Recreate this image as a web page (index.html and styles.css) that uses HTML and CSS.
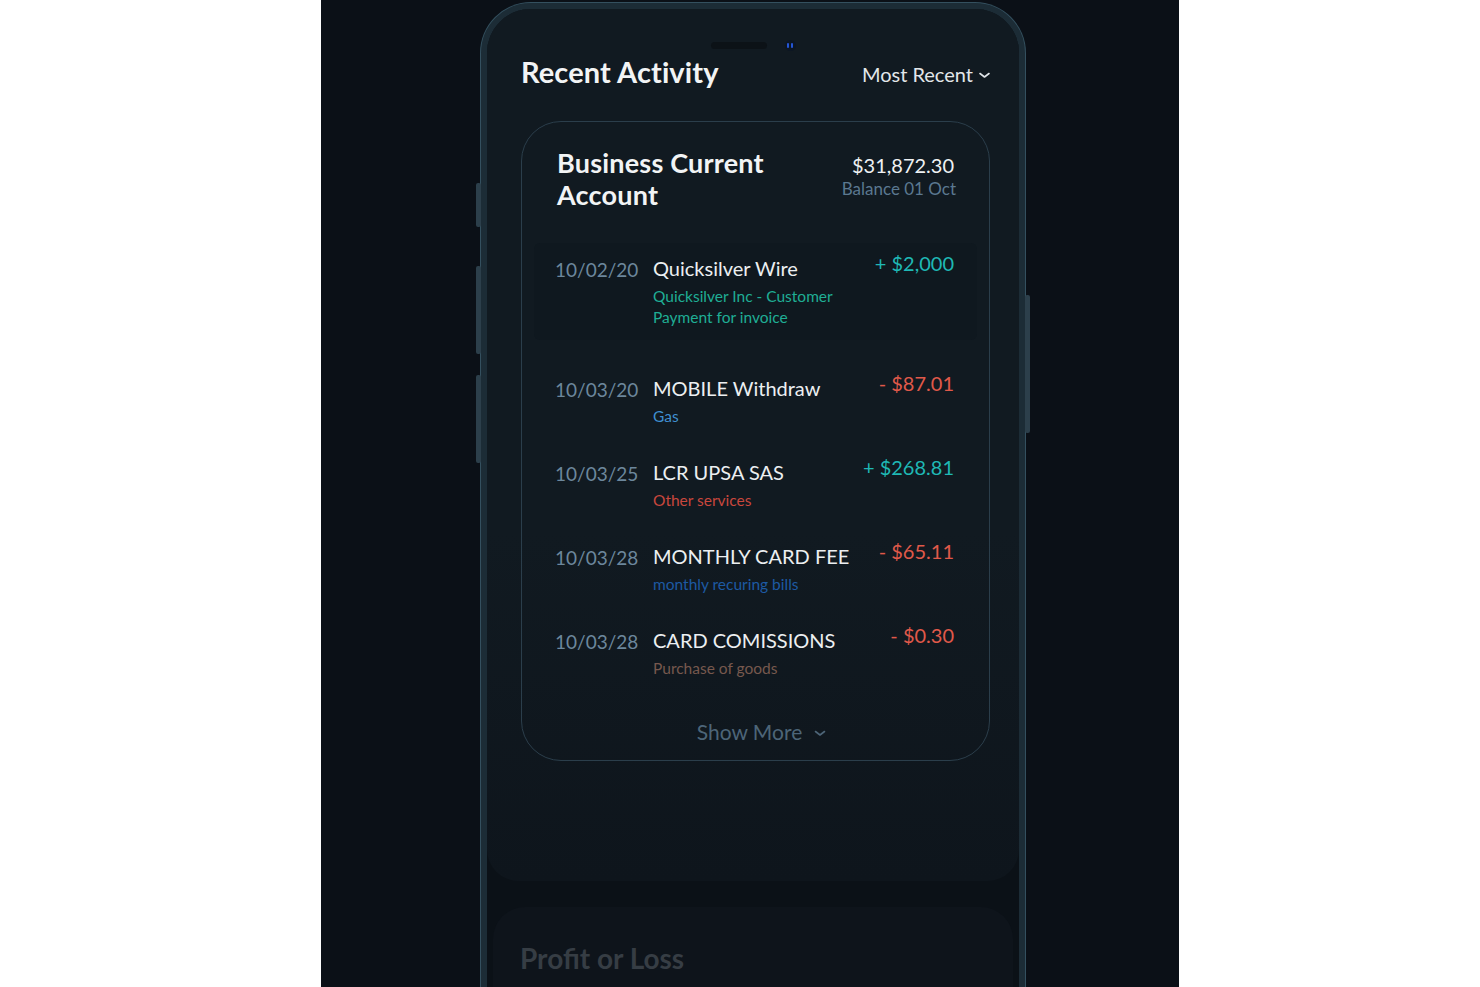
FILE: index.html
```html
<!DOCTYPE html>
<html lang="en">
<head>
<meta charset="utf-8">
<title>Recent Activity</title>
<link rel="stylesheet" href="styles.css">
</head>
<body>
<div class="stage">
  <div class="phone">
    <div class="btn btn-l1"></div>
    <div class="btn btn-l2"></div>
    <div class="btn btn-l3"></div>
    <div class="btn btn-r1"></div>
    <div class="screen">
      <section class="recent">
        <div class="statusbar">
          <span class="speaker"></span>
          <span class="camera"><i></i><i></i></span>
        </div>
        <header class="recent-head">
          <h1 class="recent-title">Recent Activity</h1>
          <div class="sort">Most Recent
            <svg class="chev" width="11" height="7" viewBox="0 0 11 7"><polyline points="1,1.5 5.5,5 10,1.5" fill="none" stroke="#dfe4e8" stroke-width="1.6" stroke-linecap="round" stroke-linejoin="round"/></svg>
          </div>
        </header>
        <div class="card">
          <div class="card-head">
            <h2 class="acct">Business Current<br>Account</h2>
            <div class="bal">
              <div class="bal-amt">$31,872.30</div>
              <div class="bal-date">Balance 01 Oct</div>
            </div>
          </div>
          <div class="rows">
            <div class="row row-hl">
              <div class="date">10/02/20</div>
              <div class="info">
                <div class="name">Quicksilver Wire</div>
                <div class="sub c-teal">Quicksilver Inc - Customer<br>Payment for invoice</div>
              </div>
              <div class="amt pos">+ $2,000</div>
            </div>
            <div class="row">
              <div class="date">10/03/20</div>
              <div class="info">
                <div class="name">MOBILE Withdraw</div>
                <div class="sub c-blue">Gas</div>
              </div>
              <div class="amt neg">- $87.01</div>
            </div>
            <div class="row">
              <div class="date">10/03/25</div>
              <div class="info">
                <div class="name">LCR UPSA SAS</div>
                <div class="sub c-red">Other services</div>
              </div>
              <div class="amt pos">+ $268.81</div>
            </div>
            <div class="row">
              <div class="date">10/03/28</div>
              <div class="info">
                <div class="name">MONTHLY CARD FEE</div>
                <div class="sub c-navy">monthly recuring bills</div>
              </div>
              <div class="amt neg">- $65.11</div>
            </div>
            <div class="row">
              <div class="date">10/03/28</div>
              <div class="info">
                <div class="name">CARD COMISSIONS</div>
                <div class="sub c-brown">Purchase of goods</div>
              </div>
              <div class="amt neg">- $0.30</div>
            </div>
          </div>
          <div class="more">Show More
            <svg class="chev" width="12" height="7" viewBox="0 0 12 7"><polyline points="1.5,1.5 6,5 10.5,1.5" fill="none" stroke="#4d6578" stroke-width="1.6" stroke-linecap="round" stroke-linejoin="round"/></svg>
          </div>
        </div>
      </section>
      <section class="pl">
        <h2 class="pl-title">Profit or Loss</h2>
      </section>
    </div>
  </div>
</div>
</body>
</html>
```

FILE: styles.css
```css
* { box-sizing: border-box; margin: 0; padding: 0; }
html, body { background: #ffffff; }
body { font-family: "Lato", "Liberation Sans", sans-serif; }

.stage {
  width: 858px;
  height: 987px;
  margin-left: 321px;
  background: #0b1017;
  overflow: hidden;
  padding-top: 3px;
}

.phone {
  position: relative;
  width: 544px;
  height: 1100px;
  margin-left: 160px;
  border: 6px solid #1c2c36;
  border-radius: 50px;
  box-shadow: 0 0 0 1px #34505f, inset 0 0 0 1px #2a404d;
  background: #0b1117;
}

.btn {
  position: absolute;
  width: 5px;
  background: #2c3f4b;
  border-radius: 2px;
}
.btn-l1 { left: -11px; top: 174px; height: 44px; }
.btn-l2 { left: -11px; top: 257px; height: 88px; }
.btn-l3 { left: -11px; top: 366px; height: 88px; }
.btn-r1 { right: -11px; top: 286px; height: 138px; }

.screen {
  height: 100%;
  border-radius: 44px;
  overflow: hidden;
  background: #0b1117;
}

.recent {
  background: linear-gradient(180deg, #111a21 0%, #111a21 60%, #0e151c 100%);
  border-radius: 0 0 32px 32px;
  padding: 30px 29px 120px 34px;
}

.statusbar {
  display: flex;
  justify-content: center;
  align-items: center;
  gap: 18px;
  height: 12px;
  margin-left: -34px;
  margin-right: -29px;
}
.speaker {
  width: 56px;
  height: 7px;
  border-radius: 4px;
  background: #0c1217;
}
.camera {
  width: 11px;
  height: 11px;
  border-radius: 50%;
  background: #0c1624;
  display: flex;
  align-items: center;
  justify-content: center;
  gap: 2px;
}
.camera i {
  display: block;
  width: 2px;
  height: 5px;
  background: #2456d6;
  border-radius: 1px;
}

.recent-head {
  margin-top: 3px;
  display: flex;
  justify-content: space-between;
  align-items: center;
  height: 36px;
  margin-bottom: 31px;
}
.recent-title {
  font-size: 29px;
  font-weight: 700;
  color: #f2f4f5;
  line-height: 36px;
  letter-spacing: 0.1px;
}
.sort {
  font-size: 20px;
  color: #e3e7ea;
  display: flex;
  align-items: center;
  gap: 6px;
  padding-top: 3px;
}
.sort .chev { margin-top: 3px; }

.card {
  border: 1px solid #2b3e4b;
  border-radius: 40px;
  height: 640px;
  padding: 25px 12px 0 12px;
  display: flex;
  flex-direction: column;
}

.card-head {
  display: flex;
  justify-content: space-between;
  align-items: flex-start;
  padding: 0 23px;
  margin-bottom: 32px;
}
.acct {
  font-size: 27px;
  font-weight: 700;
  line-height: 32px;
  color: #f2f4f5;
  letter-spacing: 0.2px;
}
.bal { text-align: right; margin-top: 5px; }
.bal-amt { font-size: 20px; line-height: 26px; color: #eef1f3; }
.bal-date { font-size: 17px; line-height: 22px; color: #5b7890; margin-right: -2px; }

.rows {
  display: flex;
  flex-direction: column;
  gap: 8px;
}
.row {
  display: flex;
  align-items: flex-start;
  padding: 12px 23px 12px 21px;
  border-radius: 6px;
}
.row-hl {
  background: #0f181f;
  margin-bottom: 15px;
}
.date {
  width: 98px;
  flex: none;
  font-size: 19px;
  line-height: 26px;
  color: #6c879c;
  padding-top: 2px;
}
.info { flex: 1; }
.name {
  font-size: 20px;
  line-height: 26px;
  color: #eceff1;
}
.sub {
  margin-top: 5px;
  font-size: 15.5px;
  line-height: 21px;
}
.c-teal { color: #1fae95; }
.c-blue { color: #3f8fd0; }
.c-red { color: #c9473d; }
.c-navy { color: #1d5aa3; }
.c-brown { color: #77584e; }

.amt {
  font-size: 20px;
  line-height: 26px;
  margin-top: -5px;
  white-space: nowrap;
}
.pos { color: #1fb8b5; }
.neg { color: #e0594a; }

.more {
  margin-top: 28px;
  align-self: center;
  margin-left: 12px;
  font-size: 21px;
  line-height: 26px;
  color: #4d6578;
  display: flex;
  align-items: center;
  gap: 12px;
}
.more .chev { margin-top: 2px; }

.pl {
  margin: 26px 6px 0;
  height: 200px;
  background: #0e141b;
  border-radius: 32px 32px 0 0;
  padding: 33px 27px;
}
.pl-title {
  font-size: 28px;
  font-weight: 700;
  color: #363d44;
  line-height: 36px;
}
```
